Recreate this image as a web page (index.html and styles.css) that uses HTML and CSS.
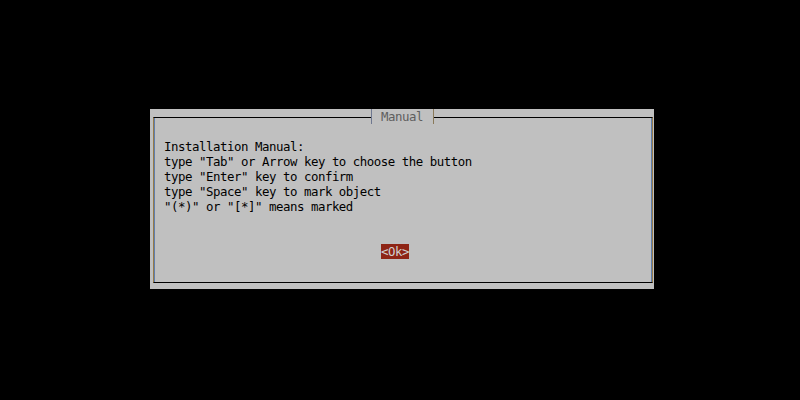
FILE: index.html
```html
<!DOCTYPE html>
<html lang="en">
<head>
    <meta charset="UTF-8">
    <title>Manual</title>
    <link rel="stylesheet" href="styles.css">
</head>
<body>
    <div class="dialog">
        <div class="frame">
            <span class="title">Manual</span>
            <pre class="msg">Installation Manual:
type "Tab" or Arrow key to choose the button
type "Enter" key to confirm
type "Space" key to mark object
"(*)" or "[*]" means marked</pre>
            <div class="buttons"><span class="btn">&lt;Ok&gt;</span></div>
        </div>
    </div>
</body>
</html>
```

FILE: styles.css
```css
body{margin:0;background:#000;font-family:"DejaVu Sans Mono","Liberation Mono",monospace;font-size:12.4px;letter-spacing:-0.465px;line-height:15px;color:#000}

.dialog{
    width:504px;
    height:180px;
    margin:109px 0 0 150px;
    background:#c0c0c0;
    padding:8px 1px 6px 3px;
    box-sizing:border-box;
}

.frame{
    position:relative;
    height:166px;
    box-sizing:border-box;
    border-top:1px solid #000;
    border-bottom:1px solid #000;
    border-left:1px solid #957a48;
    border-right:1px solid #957a48;
    box-shadow:inset 1px 0 0 #5f7fb0,inset -1px 0 0 #5f7fb0;
    padding:21px 0 0 10px;
}

.title{
    position:absolute;
    top:-9px;
    left:217px;
    height:15px;
    padding:0 10px 0 9px;
    background:#c0c0c0;
    color:#5e5e5e;
    border-left:1px solid #6f7890;
    border-right:1px solid #8a7a5a;
}

.msg{margin:0;font:inherit;white-space:pre}

.buttons{margin-top:30px;padding-left:217px;height:15px}
.btn{display:inline-block;background:#8e2415;color:#d0d0d0;height:15px}
```
